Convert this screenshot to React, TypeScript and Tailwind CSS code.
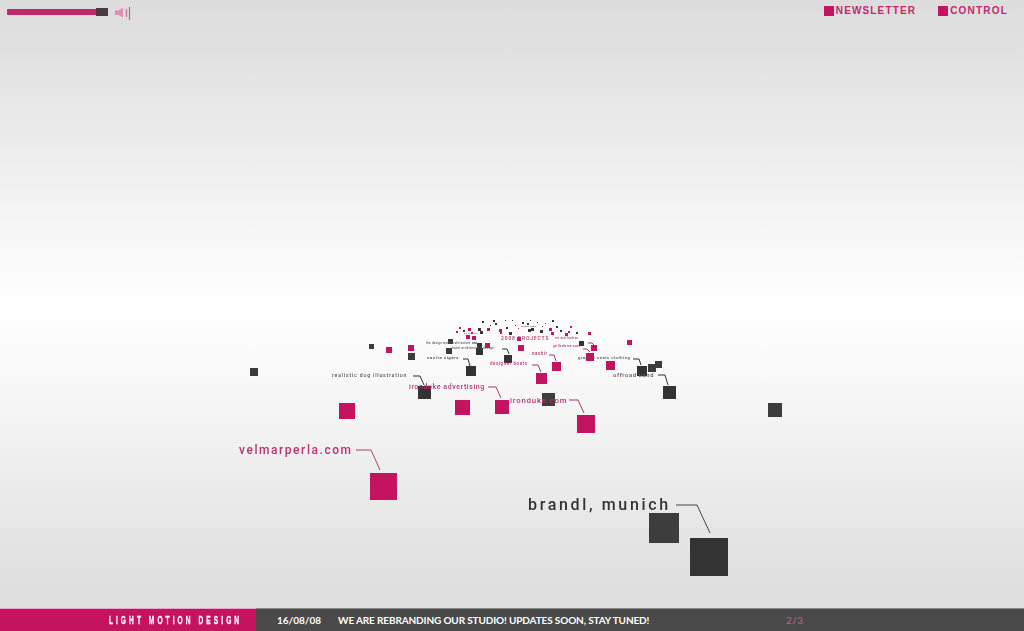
import React from "react";

const P = "#c4145f";
const D = "#333333";
const M = "#b9336f";

type N = [number, number, number, string];
// x, y, size, colour
const squares: N[] = [
  [250, 368, 8, "#3d3d3d"], [369, 344, 5, "#3d3d3d"], [386, 347, 6, P], [408, 345, 6, P], [408, 353, 7, "#3a3a3a"],
  [448, 339, 5, "#3a3a3a"], [446, 348, 6, "#3a3a3a"], [477, 343, 5, D], [476, 348, 7, D], [466, 366, 10, D],
  [504, 355, 8, D], [518, 345, 6, P], [552, 362, 9, P], [536, 373, 11, P], [586, 353, 8, P],
  [591, 345, 6, P], [579, 341, 5, D], [627, 340, 5, P], [606, 361, 9, P], [637, 366, 10, D],
  [648, 364, 8, "#3d3d3d"], [655, 361, 7, "#3d3d3d"], [663, 386, 13, D], [768, 403, 14, "#3d3d3d"],
  [418, 386, 13, D], [339, 403, 16, P], [455, 400, 15, P], [495, 400, 14, P], [542, 393, 13, "#3d3d3d"],
  [577, 415, 18, P], [370, 473, 27, P], [649, 513, 30, "#3d3d3d"], [690, 538, 38, D],
  [466, 335, 4, P], [472, 336, 4, P], [485, 343, 5, P], [517, 337, 4, P], [588, 332, 3, P],
];

// far-away, almost dust-sized items at the top of the cluster
const dust: N[] = [
  [459, 327, 2, P], [463, 330, 2, D], [468, 328, 3, P], [478, 328, 3, D], [480, 331, 3, D], [482, 321, 2, D], [493, 320, 2, D], [495, 323, 2, D],
  [487, 328, 3, P], [499, 329, 3, P], [500, 332, 2, P], [505, 320, 1, D], [506, 327, 2, D], [509, 332, 3, D], [522, 322, 2, D], [527, 323, 2, D],
  [528, 329, 3, D], [531, 328, 3, D], [537, 322, 1, D], [540, 330, 3, D], [549, 328, 3, P], [551, 332, 3, P], [552, 320, 2, D], [556, 326, 2, D],
  [560, 330, 2, D], [565, 333, 3, P], [568, 331, 2, P], [576, 332, 2, D], [570, 326, 2, P], [545, 323, 1, P], [515, 325, 1, P], [471, 332, 2, P], [490, 325, 1, D], [518, 328, 1, P],
  [456, 331, 2, P], [512, 320, 1, D], [530, 320, 1, D], [542, 326, 1, D],
];

type L = [number, number, string, number, string, number];
// x, y (box top), text, font size, colour, letter spacing
const labels: L[] = [
  [332, 373, "realistic dog illustration", 5.2, "#555555", 0.8],
  [409, 384, "ironduke advertising", 7, M, 0.6],
  [510, 397, "ironduke.com", 7.8, M, 0.8],
  [239, 444, "velmarperla.com", 12, M, 1.55],
  [528, 497, "brandl, munich", 16, "#333333", 2.65],
  [427, 356, "nanita cigars", 4.2, "#444444", 0.6],
  [490, 362, "designer boats", 4.5, M, 0.55],
  [532, 352, "nashir", 4.5, M, 0.5],
  [578, 356, "graphic seats clothing", 4.2, "#555555", 0.5],
  [613, 373, "offroad band", 5.8, "#555555", 0.65],
  [426, 342, "the design week architecture", 2.8, "#555555", 0.3],
  [452, 347, "hotel architecture design", 3, "#555555", 0.35],
  [501, 336, "2008 PROJECTS", 5, M, 0.85],
  [553, 345, "grilledwine.com", 3.2, M, 0.3],
  [555, 337, "art and fashion", 2.8, M, 0.3],
  [521, 326, "nowhere studio", 1.8, "#444444", 0.2],
  [464, 332, "art direction", 2, M, 0.2],
];

const lines: [string, string][] = [
  ["M356 450H371L380 470", "#a8406f"],
  ["M676 505H697L710 533", "#444444"],
  ["M413 376H420L424 385", D],
  ["M488 387H496L501 398", "#a33a68"],
  ["M569 400H578L584 413", "#a33a68"],
  ["M633 359H639L641 365", D],
  ["M658 375H665L668 385", D],
  ["M463 359H468L470 366", D],
  ["M532 365H538L541 372", "#a33a68"],
  ["M549 355H554L556 361", "#a33a68"],
  ["M502 349H507L509 354", D],
  ["M583 349H587L590 352", "#a33a68"],
  ["M472 343H477L480 346", D],
  ["M588 343H592L594 345", "#a33a68"],
];

export default function App() {
  return (
    <div className="relative flex h-[631px] w-[1024px] flex-col overflow-hidden bg-[linear-gradient(to_bottom,#dcdcdc_0px,#e2e2e2_60px,#ffffff_305px,#f6f6f6_400px,#dcdcdc_608px)] font-['Liberation_Sans',sans-serif]">
      <header className="flex h-[24px] items-start justify-between pl-[7px] pr-[16px]">
        <div className="flex items-start gap-[7px] pt-[7px]">
          <div className="mt-[1px] flex h-[8px] w-[101px] items-center justify-end">
            <div className="h-[6px] flex-1 rounded-l-[1px] bg-[#c2286a]" />
            <div className="h-[8px] w-[12px] bg-[#4a3a44]" />
          </div>
          <svg width="16" height="14" viewBox="0 0 16 14">
            <path d="M0 3.5H3.5L8 0.5V10.5L3.5 8H0Z" fill="#e08fb2" />
            <path d="M11.5 2V10" stroke="#d078a0" strokeWidth="1.4" />
            <path d="M14.5 0V13" stroke="#c9608f" strokeWidth="1.2" />
          </svg>
        </div>
        <nav className="flex gap-[22px] pt-[6px]">
          <div className="flex items-center gap-[2px]">
            <span className="h-[10px] w-[10px] bg-[#c4145f]" />
            <span className="text-[10px] font-bold leading-[10px] tracking-[1.15px] text-[#c2286a]">NEWSLETTER</span>
          </div>
          <div className="flex items-center gap-[2px]">
            <span className="h-[10px] w-[10px] bg-[#c4145f]" />
            <span className="text-[10px] font-bold leading-[10px] tracking-[1.2px] text-[#c2286a]">CONTROL</span>
          </div>
        </nav>
      </header>

      <main className="relative flex-1">
        <div className="absolute left-0 top-[-24px] h-[631px] w-[1024px] blur-[0.3px]">
          {dust.concat(squares).map(([x, y, s, c], i) => (
            <div
              key={i}
              className="absolute"
              style={{ left: x, top: y, width: s, height: s, backgroundColor: c }}
            />
          ))}
          <svg width="1024" height="631" className="absolute left-0 top-0" fill="none">
            {lines.map(([d, c], i) => (
              <path key={i} d={d} stroke={c} strokeWidth={1} />
            ))}
          </svg>
          {labels.map(([x, y, t, fs, c, ls], i) => (
            <div
              key={i}
              className="absolute whitespace-nowrap font-['Roboto',sans-serif] font-medium leading-none"
              style={{ left: x, top: y, fontSize: fs, color: c, letterSpacing: ls }}
            >
              {t}
            </div>
          ))}
        </div>
      </main>

      <footer className="flex h-[23px] items-stretch border-t border-t-[#e9a5c3] bg-[#4a4a4a] font-bold">
        <div className="flex w-[256px] justify-end bg-[#c4145f] pr-[14px]">
          <span className="origin-right scale-x-[.6] whitespace-nowrap text-[11px] leading-[23px] tracking-[5.1px] text-white [-webkit-text-stroke:0.3px_white]">
            LIGHT MOTION DESIGN
          </span>
        </div>
        <div className="-mt-px flex flex-1 border-t border-t-[#8a8a8a] pl-[21px] font-['Lato',sans-serif] text-[10px] leading-[23px] text-white">
          <span className="w-[61px]">16/08/08</span>
          <span className="w-[448px] whitespace-nowrap tracking-[-0.13px]">WE ARE REBRANDING OUR STUDIO! UPDATES SOON, STAY TUNED!</span>
          <span className="font-normal tracking-[0.5px] text-[#c0628f]">2/3</span>
        </div>
      </footer>
    </div>
  );
}
